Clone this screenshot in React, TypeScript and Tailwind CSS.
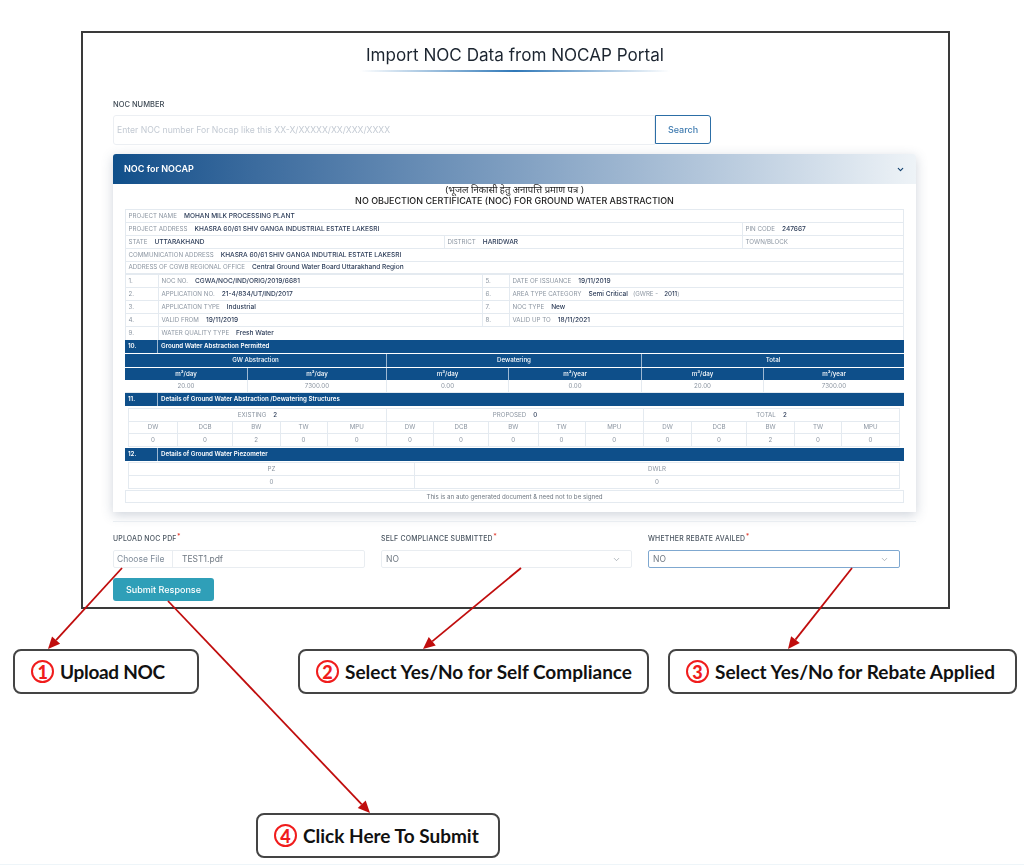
import { ChevronDown } from "lucide-react";

const C = "flex items-center px-[2.5px] h-full border-r border-[#e4eaf0] last:border-r-0 whitespace-nowrap overflow-hidden";
const CC = "flex items-center justify-center h-full border-r border-[#e4eaf0] last:border-r-0 whitespace-nowrap overflow-hidden";
const HC = "flex items-center justify-center h-full border-r border-[#9db8d2] last:border-r-0 whitespace-nowrap text-white font-medium bg-[#0e4f8a]";

function LV({ l, v, extra }: { l?: string; v?: string; extra?: React.ReactNode }) {
  return (
    <div className={C}>
      <span className="text-[#8b95a1]">{l}</span>
      {v && <span className="ml-[7px] text-[6.55px] font-medium text-[#2b3b57]">{v}</span>}
      {extra}
    </div>
  );
}

function Num({ n }: { n: string }) {
  return <div className={C + " text-[#8b95a1]"}>{n}</div>;
}

function Bar({ n, t }: { n: string; t: string }) {
  return (
    <div className="grid grid-cols-[33px_1fr] h-[13px] bg-[#0e4f8a] text-white font-semibold">
      <div className="flex items-center px-[3px] border-r border-[#9db8d2]">{n}</div>
      <div className="flex items-center px-[3px]">{t}</div>
    </div>
  );
}

const structCols = ["DW", "DCB", "BW", "TW", "MPU", "DW", "DCB", "BW", "TW", "MPU", "DW", "DCB", "BW", "TW", "MPU"];
const structVals = ["0", "0", "2", "0", "0", "0", "0", "0", "0", "0", "0", "0", "2", "0", "0"];

function Field({ label, children }: { label: string; children: React.ReactNode }) {
  return (
    <div className="flex flex-col">
      <div className="h-[12px] mb-[5px] flex items-center text-[6.9px] tracking-[0.2px] text-[#4a5560] font-medium">
        {label}
        <span className="text-[#e23b2e] self-start leading-[8px] ml-[0.5px]">*</span>
      </div>
      {children}
    </div>
  );
}

function Select({ focus }: { focus?: boolean }) {
  return (
    <div
      className={
        "h-[18px] flex items-center justify-between pl-[4px] pr-[10px] rounded-[2px] text-[8.5px] text-[#6f7882] border " +
        (focus ? "border-[#7fa8d0]" : "border-[#e9edf1]")
      }
    >
      <span>NO</span>
      <ChevronDown className="w-[9px] h-[9px] text-[#7d8791]" strokeWidth={1.5} />
    </div>
  );
}

function Callout({ n, t, cls }: { n: string; t: string; cls: string }) {
  return (
    <div className={"h-[45px] border-2 border-[#444] rounded-[8px] bg-white flex items-center font-['Lato',sans-serif] font-bold text-[19px] text-[#111] " + cls}>
      <span className="w-[23px] h-[23px] rounded-full border-2 border-[#f01c1c] text-[#f01c1c] flex items-center justify-center text-[18px] font-black leading-none shrink-0 mr-[6px]">
        {n}
      </span>
      <span className="whitespace-nowrap pt-[1px]">{t}</span>
    </div>
  );
}

function Arrow({ x1, y1, x2, y2 }: { x1: number; y1: number; x2: number; y2: number }) {
  const a = Math.atan2(y2 - y1, x2 - x1);
  const L = 12;
  const W = 5.5;
  const bx = x2 - L * Math.cos(a);
  const by = y2 - L * Math.sin(a);
  const nx = -Math.sin(a) * W;
  const ny = Math.cos(a) * W;
  return (
    <g>
      <line x1={x1} y1={y1} x2={bx} y2={by} stroke="#c00d0d" strokeWidth="1.8" />
      <polygon points={`${x2},${y2} ${bx + nx},${by + ny} ${bx - nx},${by - ny}`} fill="#c00d0d" />
    </g>
  );
}

export default function App() {
  return (
    <div className="relative w-[1024px] h-[865px] bg-white overflow-hidden border-b border-[#eef5f9] font-['Inter',sans-serif]">
      <div className="ml-[81px] mt-[31px] w-[869px] h-[578px] border-2 border-[#3a3a3a] pl-[30px] pr-[31px] [filter:blur(0.4px)]">
        <div className="pt-[12px] flex flex-col items-center">
          <h1 className="h-[20px] leading-[20px] text-[17.1px] text-[#1c2530] whitespace-nowrap">
            Import NOC Data from NOCAP Portal
          </h1>
          <div className="mt-[5px] w-[310px] h-[2px] bg-gradient-to-r from-transparent via-[#2f78b8] to-transparent" />
        </div>

        <div className="mt-[28px] h-[10px] leading-[10px] text-[7.5px] text-[#3f4a55] font-medium">NOC NUMBER</div>
        <div className="mt-[5px] flex h-[30px] w-[598px]">
          <input
            readOnly
            placeholder="Enter NOC number For Nocap like this XX-X/XXXXX/XX/XXX/XXXX"
            className="flex-1 h-full px-[3px] border border-[#eceff3] rounded-l-[3px] text-[8.65px] placeholder:text-[#c3cad3] outline-none"
          />
          <button className="w-[56px] h-[29px] border border-[#2c6ea6] rounded-r-[3px] text-[9px] font-medium text-[#3f7bb0]">
            Search
          </button>
        </div>

        <div className="mt-[9px] w-[803px] h-[358px] bg-white rounded-t-[3px] shadow-[0_3px_12px_rgba(60,80,110,0.25)]">
          <div className="h-[30px] rounded-t-[3px] bg-gradient-to-r from-[#0e4f8a] to-[#eef3f7] flex items-center justify-between pl-[11px] pr-[11px]">
            <span className="text-[9px] font-semibold text-white">NOC for NOCAP</span>
            <ChevronDown className="w-[9px] h-[9px] text-[#12406e]" strokeWidth={3} />
          </div>
          <div className="px-[12px] text-[6.2px] leading-none">
            <div className="h-[25px] flex flex-col items-center text-[#222]">
              <div className="h-[11px] leading-[11px] text-[9.5px] font-['Noto_Sans','DejaVu_Sans',sans-serif]">
                (भूजल निकासी हेतु अनापत्ति प्रमाण पत्र )
              </div>
              <div className="h-[11px] leading-[11px] text-[8.97px] font-medium whitespace-nowrap">
                NO OBJECTION CERTIFICATE (NOC) FOR GROUND WATER ABSTRACTION
              </div>
            </div>

            <div className="border border-b-0 border-[#e4eaf0]">
              <div className="h-[13px] border-b border-[#e4eaf0]"><LV l="PROJECT NAME" v="MOHAN MILK PROCESSING PLANT" /></div>
              <div className="h-[13px] border-b border-[#e4eaf0] grid grid-cols-[617px_1fr]">
                <LV l="PROJECT ADDRESS" v="KHASRA 60/61 SHIV GANGA INDUSTRIAL ESTATE LAKESRI" />
                <LV l="PIN CODE" v="247667" />
              </div>
              <div className="h-[13px] border-b border-[#e4eaf0] grid grid-cols-[319px_298px_1fr]">
                <LV l="STATE" v="UTTARAKHAND" />
                <LV l="DISTRICT" v="HARIDWAR" />
                <LV l="TOWN/BLOCK" />
              </div>
              <div className="h-[13px] border-b border-[#e4eaf0]"><LV l="COMMUNICATION ADDRESS" v="KHASRA 60/61 SHIV GANGA INDUTRIAL ESTATE LAKESRI" /></div>
              <div className="h-[13px] border-b-2 border-[#e4eaf0]"><LV l="ADDRESS OF CGWB REGIONAL OFFICE" v="Central Ground Water Board Uttarakhand Region" /></div>
            </div>

            <div className="border-x border-[#e4eaf0]">
              {[
                ["1.", "NOC NO.", "CGWA/NOC/IND/ORIG/2019/6681", "5.", "DATE OF ISSUANCE", "19/11/2019"],
                ["2.", "APPLICATION NO.", "21-4/834/UT/IND/2017", "6.", "AREA TYPE CATEGORY", "Semi Critical"],
                ["3.", "APPLICATION TYPE", "Industrial", "7.", "NOC TYPE", "New"],
                ["4.", "VALID FROM", "19/11/2019", "8.", "VALID UP TO", "18/11/2021"],
              ].map((r) => (
                <div key={r[0]} className="h-[13px] border-b border-[#e4eaf0] grid grid-cols-[33px_324px_27px_1fr]">
                  <Num n={r[0]} />
                  <LV l={r[1]} v={r[2]} />
                  <Num n={r[3]} />
                  <LV
                    l={r[4]}
                    v={r[5]}
                    extra={
                      r[3] === "6." ? (
                        <>
                          <span className="ml-[5px] text-[#8b95a1]">(GWRE -</span>
                          <span className="ml-[6px] font-medium text-[#2b3b57]">2011</span>
                          <span className="text-[#8b95a1]">)</span>
                        </>
                      ) : undefined
                    }
                  />
                </div>
              ))}
              <div className="h-[13px] grid grid-cols-[33px_1fr]">
                <Num n="9." />
                <LV l="WATER QUALITY TYPE" v="Fresh Water" />
              </div>
            </div>

            <Bar n="10." t="Ground Water Abstraction Permitted" />
            <div className="mt-[1px] h-[13px] grid grid-cols-[262px_255px_262px]">
              <div className={HC}>GW Abstraction</div>
              <div className={HC}>Dewatering</div>
              <div className={HC}>Total</div>
            </div>
            <div className="mt-[1px] h-[12px] grid grid-cols-[123px_139px_122px_133px_122px_140px]">
              {["m³/day", "m³/day", "m³/day", "m³/year", "m³/day", "m³/year"].map((t, i) => (
                <div key={i} className={HC}>{t}</div>
              ))}
            </div>
            <div className="h-[13px] border-b border-[#e4eaf0] grid grid-cols-[123px_139px_122px_133px_122px_140px] text-[#8b95a1]">
              {["20.00", "7300.00", "0.00", "0.00", "20.00", "7300.00"].map((t, i) => (
                <div key={i} className={CC}>{t}</div>
              ))}
            </div>
            <Bar n="11." t="Details of Ground Water Abstraction /Dewatering Structures" />

            <div className="mt-[2px] mx-[3px] w-[772px] border border-b-0 border-[#e4eaf0] text-[#8b95a1]">
              <div className="h-[12.67px] border-b border-[#e4eaf0] grid grid-cols-[258px_257px_1fr]">
                {[["EXISTING", "2"], ["PROPOSED", "0"], ["TOTAL", "2"]].map(([a, b]) => (
                  <div key={a} className={CC}>
                    {a}
                    <span className="ml-[7px] font-medium text-[#2b3b57]">{b}</span>
                  </div>
                ))}
              </div>
              {[structCols, structVals].map((row, ri) => (
                <div
                  key={ri}
                  className="h-[12.67px] border-b border-[#e4eaf0] grid grid-cols-[49px_55px_47.5px_47px_59.5px_47px_55px_49.5px_47px_58.5px_48px_55px_48px_47px_1fr]"
                >
                  {row.map((t, i) => (
                    <div key={i} className={CC}>{t}</div>
                  ))}
                </div>
              ))}
            </div>

            <div className="mt-[1px]"><Bar n="12." t="Details of Ground Water Piezometer" /></div>

            <div className="mt-[1.5px] mx-[3px] w-[772px] border border-b-0 border-[#e4eaf0] text-[#8b95a1]">
              {[["PZ", "DWLR"], ["0", "0"]].map((r, i) => (
                <div key={i} className="h-[13px] border-b border-[#e4eaf0] grid grid-cols-[286px_1fr]">
                  <div className={CC}>{r[0]}</div>
                  <div className={CC}>{r[1]}</div>
                </div>
              ))}
            </div>

            <div className="mt-[1px] h-[13px] border border-[#e4eaf0] flex items-center justify-center text-[#6f7882]">
              This is an auto generated document &amp; need not to be signed
            </div>
          </div>
        </div>

        <div className="mt-[9px] w-[803px] h-[1px] bg-[#e9edf1]" />

        <div className="mt-[11px] grid grid-cols-[252px_251px_252px] gap-x-[16px] w-[787px]">
          <Field label="UPLOAD NOC PDF">
            <div className="h-[18px] flex items-center border border-[#e9edf1] rounded-[2px] text-[8.5px]">
              <span className="h-full w-[59px] flex items-center pl-[3px] border-r border-[#e9edf1] text-[#7f8b99]">Choose File</span>
              <span className="ml-[9px] text-[#6f7882]">TEST1.pdf</span>
            </div>
          </Field>
          <Field label="SELF COMPLIANCE SUBMITTED"><Select /></Field>
          <Field label="WHETHER REBATE AVAILED"><Select focus /></Field>
        </div>

        <button className="mt-[10px] block w-[101px] h-[23px] rounded-[3px] bg-[#2f9fb8] text-white text-[9px] font-medium">
          Submit Response
        </button>
      </div>

      <div className="mt-[40px] ml-[13px] flex">
        <Callout n="1" t="Upload NOC" cls="w-[186px] pl-[16px] tracking-[-0.3px]" />
        <Callout n="2" t="Select Yes/No for Self Compliance" cls="w-[351px] ml-[99px] pl-[16px]" />
        <Callout n="3" t="Select Yes/No for Rebate Applied" cls="w-[349px] ml-[19px] pl-[16px]" />
      </div>
      <div className="mt-[119px] ml-[256px] flex">
        <Callout n="4" t="Click Here To Submit" cls="w-[244px] pl-[16px]" />
      </div>

      <svg className="absolute left-0 top-0 w-[1024px] h-[865px] pointer-events-none" viewBox="0 0 1024 865">
        <Arrow x1={122} y1={568} x2={48} y2={649} />
        <Arrow x1={521} y1={568} x2={423} y2={649} />
        <Arrow x1={852} y1={568} x2={788} y2={649} />
        <Arrow x1={168} y1={601} x2={370} y2={813} />
      </svg>
    </div>
  );
}
